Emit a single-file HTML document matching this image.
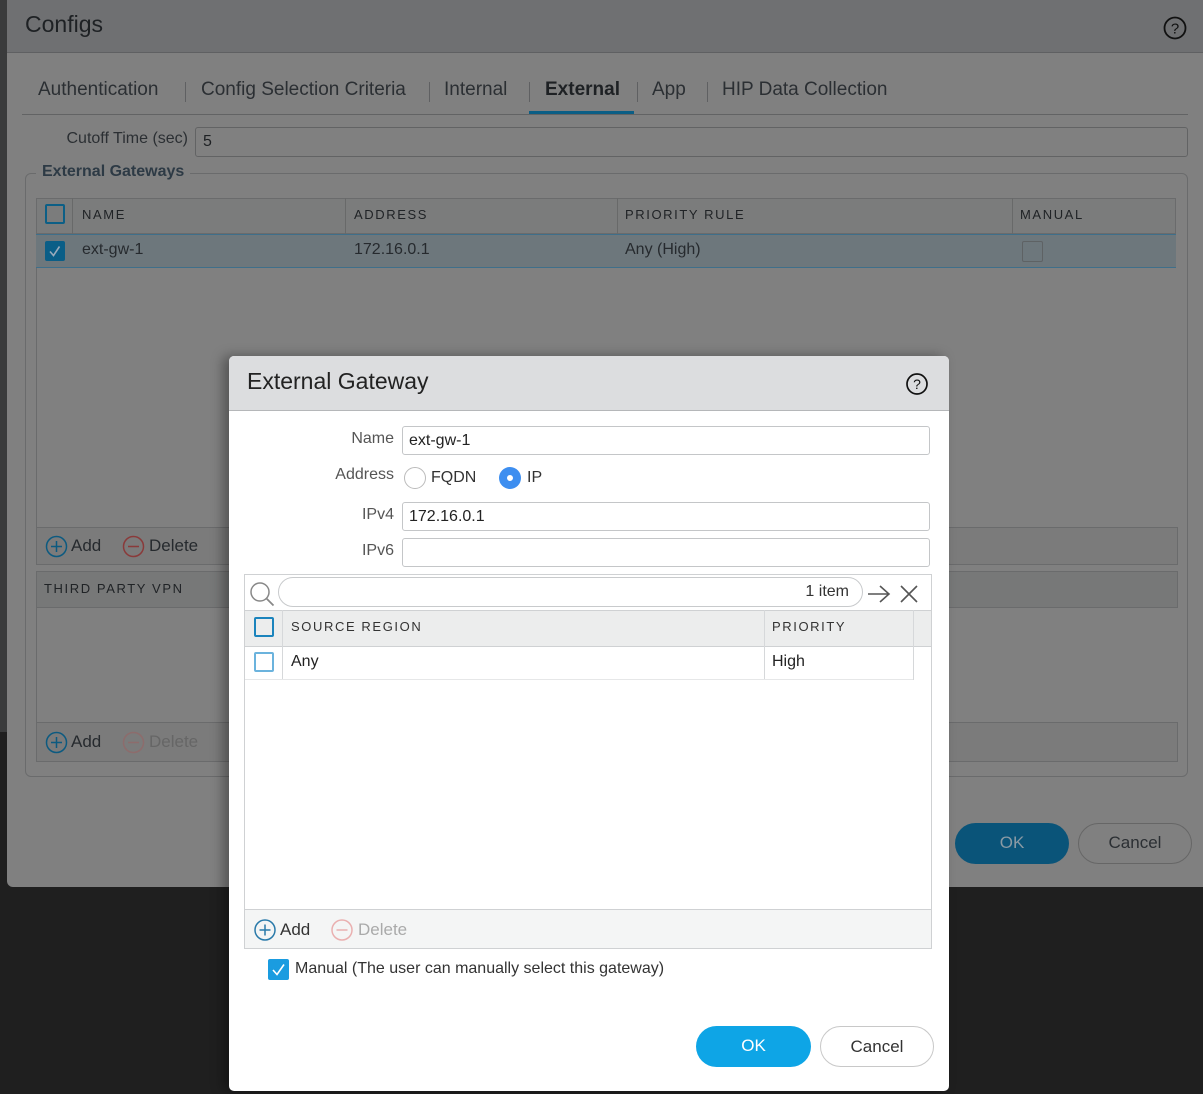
<!DOCTYPE html>
<html><head><meta charset="utf-8"><style>
*{box-sizing:border-box;margin:0;padding:0}
body{width:1203px;height:1094px;overflow:hidden;background:#1f1f1f;font-family:"Liberation Sans",sans-serif;position:relative;color:#262a2e}
.a{position:absolute}
.lstrip{left:0;top:0;width:7px;height:732px;background:#3a3b3c}
.outer{left:7px;top:0;width:1196px;height:887px;background:#808080;border-radius:0 0 0 6px}
.oh{left:7px;top:0;width:1196px;height:53px;background:#6f7072;border-bottom:1px solid #5f6062}
.t{font-size:19px;color:#2b2f33;top:79px}
.sep{width:1px;height:20px;background:#5f6062;top:82px}
.cb{width:20px;height:20px;border:2px solid #0c5f86;border-radius:2px}
.hd{font-size:13px;letter-spacing:1.6px;color:#202326}
.mcb{width:20px;height:20px;border:2px solid #1a8fc9;border-radius:2px;background:#fff}
.inp{border:1px solid #c4c6c8;border-radius:3px;background:#fff;font-size:16px;padding:0 6px;line-height:27px;color:#222}
.lbl{font-size:16px;color:#555;text-align:right;width:160px}
</style></head><body>
<div class="a lstrip"></div>
<div class="a outer"></div>
<div class="a oh"></div>
<div class="a" style="left:25px;top:11px;font-size:23px;color:#1e2124">Configs</div>
<svg class="a" style="left:1162px;top:15px" width="26" height="26" viewBox="0 0 26 26"><circle cx="13" cy="13" r="10.5" fill="none" stroke="#111" stroke-width="1.8"/><text x="13" y="18.5" font-size="15" text-anchor="middle" fill="#111" font-family="Liberation Sans">?</text></svg>
<div class="a t" style="left:38px">Authentication</div>
<div class="a sep" style="left:185px"></div>
<div class="a t" style="left:201px">Config Selection Criteria</div>
<div class="a sep" style="left:429px"></div>
<div class="a t" style="left:444px">Internal</div>
<div class="a sep" style="left:529px"></div>
<div class="a t" style="left:545px;font-weight:bold;color:#1e2124">External</div>
<div class="a sep" style="left:637px"></div>
<div class="a t" style="left:652px">App</div>
<div class="a sep" style="left:707px"></div>
<div class="a t" style="left:722px">HIP Data Collection</div>
<div class="a" style="left:22px;top:114px;width:1166px;height:1px;background:#626364"></div>
<div class="a" style="left:529px;top:111px;width:105px;height:3px;background:#0b5e85"></div>
<div class="a" style="left:30px;top:130px;width:158px;text-align:right;font-size:16px;color:#2b2f33">Cutoff Time (sec)</div>
<div class="a" style="left:195px;top:127px;width:993px;height:30px;border:1px solid #626364;border-radius:3px;font-size:16px;padding-left:7px;line-height:27px;color:#1e2124">5</div>
<div class="a" style="left:25px;top:173px;width:1163px;height:604px;border:1px solid #6a6b6c;border-radius:6px"></div>
<div class="a" style="left:36px;top:163px;padding:0 6px;background:#808080;font-size:16px;font-weight:bold;color:#2d3a45">External Gateways</div>
<div class="a" style="left:36px;top:198px;width:1140px;height:36px;background:#7b7c7c;border:1px solid #6a6b6c"></div>
<div class="a cb" style="left:45px;top:204px"></div>
<div class="a" style="left:72px;top:198px;width:1px;height:36px;background:#686969"></div>
<div class="a" style="left:345px;top:198px;width:1px;height:36px;background:#686969"></div>
<div class="a" style="left:617px;top:198px;width:1px;height:36px;background:#686969"></div>
<div class="a" style="left:1012px;top:198px;width:1px;height:36px;background:#686969"></div>
<div class="a hd" style="left:82px;top:207px">NAME</div>
<div class="a hd" style="left:354px;top:207px">ADDRESS</div>
<div class="a hd" style="left:625px;top:207px">PRIORITY RULE</div>
<div class="a hd" style="left:1020px;top:207px">MANUAL</div>
<div class="a" style="left:36px;top:234px;width:1140px;height:34px;background:#6d777c;border-top:1px solid #3f6f8a;border-bottom:1px solid #3f6f8a"></div>
<div class="a" style="left:45px;top:241px;width:20px;height:20px;background:#0a5e87;border-radius:2px"><svg width="20" height="20"><path d="M5 10.5l3.5 4 6-9" stroke="#9ab" stroke-width="1.6" fill="none"/></svg></div>
<div class="a" style="left:82px;top:241px;font-size:16px">ext-gw-1</div>
<div class="a" style="left:354px;top:241px;font-size:16px">172.16.0.1</div>
<div class="a" style="left:625px;top:241px;font-size:16px">Any (High)</div>
<div class="a" style="left:1022px;top:241px;width:21px;height:21px;border:1.5px solid #5e6264;border-radius:2px"></div>
<div class="a" style="left:36px;top:268px;width:1px;height:260px;background:#6a6b6c"></div>
<div class="a" style="left:36px;top:527px;width:1142px;height:38px;background:#7b7b7b;border:1px solid #6a6b6c"></div>
<svg class="a" style="left:45px;top:535px" width="24" height="24"><circle cx="11.5" cy="11.5" r="10" fill="none" stroke="#0c5a80" stroke-width="1.5"/><path d="M11.5 6v11M6 11.5h11" stroke="#0c5a80" stroke-width="1.5"/></svg>
<div class="a" style="left:71px;top:536px;font-size:17px">Add</div>
<svg class="a" style="left:122px;top:535px" width="24" height="24"><circle cx="11.5" cy="11.5" r="10" fill="none" stroke="#8a3a3a" stroke-width="1.5"/><path d="M6 11.5h11" stroke="#8a3a3a" stroke-width="1.5"/></svg>
<div class="a" style="left:149px;top:536px;font-size:17px">Delete</div>
<div class="a" style="left:36px;top:571px;width:1142px;height:37px;background:#777878;border:1px solid #6a6b6c"></div>
<div class="a hd" style="left:44px;top:581px">THIRD PARTY VPN</div>
<div class="a" style="left:36px;top:608px;width:1px;height:115px;background:#6a6b6c"></div>
<div class="a" style="left:36px;top:722px;width:1142px;height:40px;background:#7b7b7b;border:1px solid #6a6b6c"></div>
<svg class="a" style="left:45px;top:731px" width="24" height="24"><circle cx="11.5" cy="11.5" r="10" fill="none" stroke="#0c5a80" stroke-width="1.5"/><path d="M11.5 6v11M6 11.5h11" stroke="#0c5a80" stroke-width="1.5"/></svg>
<div class="a" style="left:71px;top:732px;font-size:17px">Add</div>
<svg class="a" style="left:122px;top:731px" width="24" height="24"><circle cx="11.5" cy="11.5" r="10" fill="none" stroke="#8d6c6c" stroke-width="1.5"/><path d="M6 11.5h11" stroke="#8d6c6c" stroke-width="1.5"/></svg>
<div class="a" style="left:149px;top:732px;font-size:17px;color:#666">Delete</div>
<div class="a" style="left:955px;top:823px;width:114px;height:41px;border-radius:21px;background:#0a5479;color:#8a9aa4;font-size:17px;text-align:center;line-height:40px">OK</div>
<div class="a" style="left:1078px;top:823px;width:114px;height:41px;border-radius:21px;border:1px solid #666;color:#2b2f33;font-size:17px;text-align:center;line-height:38px">Cancel</div>

<div class="a" style="left:229px;top:356px;width:720px;height:735px;background:#fff;border-radius:5px;box-shadow:-6px 0 12px rgba(0,0,0,.35)"></div>
<div class="a" style="left:229px;top:356px;width:720px;height:55px;background:#dcdddf;border-radius:5px 5px 0 0;border-bottom:1px solid #b5b7b9"></div>
<div class="a" style="left:247px;top:368px;font-size:23px;color:#222">External Gateway</div>
<svg class="a" style="left:905px;top:372px" width="24" height="24" viewBox="0 0 24 24"><circle cx="12" cy="12" r="10" fill="none" stroke="#111" stroke-width="1.7"/><text x="12" y="17" font-size="14" text-anchor="middle" fill="#111" font-family="Liberation Sans">?</text></svg>
<div class="a lbl" style="left:234px;top:430px">Name</div>
<div class="a inp" style="left:402px;top:426px;width:528px;height:29px">ext-gw-1</div>
<div class="a lbl" style="left:234px;top:466px">Address</div>
<div class="a" style="left:404px;top:467px;width:22px;height:22px;border:1.5px solid #bbb;border-radius:50%"></div>
<div class="a" style="left:431px;top:469px;font-size:16px;color:#333">FQDN</div>
<div class="a" style="left:499px;top:467px;width:22px;height:22px;background:#3d8ef0;border-radius:50%"><div class="a" style="left:8px;top:8px;width:6px;height:6px;background:#fff;border-radius:50%"></div></div>
<div class="a" style="left:527px;top:469px;font-size:16px;color:#333">IP</div>
<div class="a lbl" style="left:234px;top:506px">IPv4</div>
<div class="a inp" style="left:402px;top:502px;width:528px;height:29px">172.16.0.1</div>
<div class="a lbl" style="left:234px;top:542px">IPv6</div>
<div class="a inp" style="left:402px;top:538px;width:528px;height:29px"></div>
<div class="a" style="left:244px;top:574px;width:688px;height:375px;border:1px solid #cfd1d3"></div>
<svg class="a" style="left:248px;top:580px" width="28" height="28"><circle cx="12" cy="12" r="9" fill="none" stroke="#888" stroke-width="1.5"/><path d="M18.5 18.5l7 7" stroke="#888" stroke-width="1.8"/></svg>
<div class="a" style="left:278px;top:577px;width:585px;height:30px;border:1px solid #c8cacc;border-radius:15px;text-align:right;padding-right:13px;font-size:16px;line-height:28px;color:#333">1 item</div>
<svg class="a" style="left:866px;top:582px" width="60" height="24"><path d="M2 12h21M14 4l9 8-9 8" stroke="#555" stroke-width="1.6" fill="none"/><path d="M35 4l16 16M51 4L35 20" stroke="#555" stroke-width="1.6"/></svg>
<div class="a" style="left:245px;top:610px;width:686px;height:37px;background:#eceded;border-top:1px solid #cfd1d3;border-bottom:1px solid #cfd1d3"></div>
<div class="a mcb" style="left:254px;top:617px;background:transparent;border-color:#1b84bd"></div>
<div class="a" style="left:282px;top:610px;width:1px;height:70px;background:#d6d8da"></div>
<div class="a" style="left:764px;top:610px;width:1px;height:70px;background:#d6d8da"></div>
<div class="a" style="left:913px;top:610px;width:1px;height:70px;background:#d6d8da"></div>
<div class="a hd" style="left:291px;top:619px;color:#333">SOURCE REGION</div>
<div class="a hd" style="left:772px;top:619px;color:#333">PRIORITY</div>
<div class="a" style="left:245px;top:679px;width:668px;height:1px;background:#e6e7e8"></div>
<div class="a mcb" style="left:254px;top:652px;border-color:#6bb3dd"></div>
<div class="a" style="left:291px;top:653px;font-size:16px;color:#222">Any</div>
<div class="a" style="left:772px;top:653px;font-size:16px;color:#222">High</div>
<div class="a" style="left:245px;top:909px;width:686px;height:39px;background:#f4f5f5;border-top:1px solid #cfd1d3"></div>
<svg class="a" style="left:253px;top:918px" width="24" height="24"><circle cx="12" cy="12" r="10" fill="none" stroke="#2a7aaa" stroke-width="1.5"/><path d="M12 6.5v11M6.5 12h11" stroke="#2a7aaa" stroke-width="1.5"/></svg>
<div class="a" style="left:280px;top:920px;font-size:17px;color:#333">Add</div>
<svg class="a" style="left:330px;top:918px" width="24" height="24"><circle cx="12" cy="12" r="10" fill="none" stroke="#eab0b0" stroke-width="1.5"/><path d="M6.5 12h11" stroke="#eab0b0" stroke-width="1.5"/></svg>
<div class="a" style="left:358px;top:920px;font-size:17px;color:#aaa">Delete</div>
<div class="a" style="left:268px;top:959px;width:21px;height:21px;background:#1a9ce0;border-radius:2px"><svg width="21" height="21"><path d="M5 11l4 4.5 7-10" stroke="#fff" stroke-width="1.6" fill="none"/></svg></div>
<div class="a" style="left:295px;top:960px;font-size:16px;color:#333">Manual (The user can manually select this gateway)</div>
<div class="a" style="left:696px;top:1026px;width:115px;height:41px;border-radius:21px;background:#0ea5e6;color:#fff;font-size:17px;text-align:center;line-height:40px">OK</div>
<div class="a" style="left:820px;top:1026px;width:114px;height:41px;border-radius:21px;border:1px solid #c8c8c8;color:#333;font-size:17px;text-align:center;line-height:39px">Cancel</div>
</body></html>
